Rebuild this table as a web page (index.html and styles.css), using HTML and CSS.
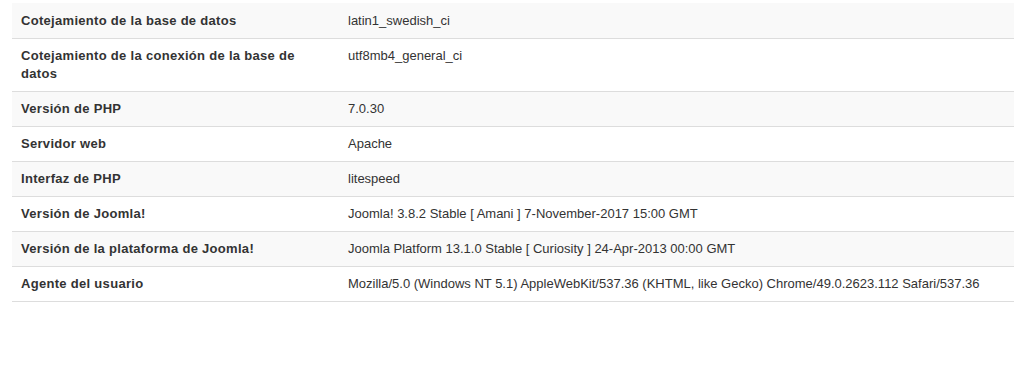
FILE: index.html
```html
<!DOCTYPE html>
<html lang="es">
<head>
<meta charset="utf-8">
<title>Información del sistema</title>
<link rel="stylesheet" href="styles.css">
</head>
<body>
<table class="info-table">
  <tbody>
    <tr><th>Cotejamiento de la base de datos</th><td>latin1_swedish_ci</td></tr>
    <tr><th>Cotejamiento de la conexión de la base de datos</th><td>utf8mb4_general_ci</td></tr>
    <tr><th>Versión de PHP</th><td>7.0.30</td></tr>
    <tr><th>Servidor web</th><td>Apache</td></tr>
    <tr><th>Interfaz de PHP</th><td>litespeed</td></tr>
    <tr><th>Versión de Joomla!</th><td>Joomla! 3.8.2 Stable [ Amani ] 7-November-2017 15:00 GMT</td></tr>
    <tr><th>Versión de la plataforma de Joomla!</th><td>Joomla Platform 13.1.0 Stable [ Curiosity ] 24-Apr-2013 00:00 GMT</td></tr>
    <tr><th>Agente del usuario</th><td>Mozilla/5.0 (Windows NT 5.1) AppleWebKit/537.36 (KHTML, like Gecko) Chrome/49.0.2623.112 Safari/537.36</td></tr>
  </tbody>
</table>
</body>
</html>
```

FILE: styles.css
```css
html, body {
  margin: 0;
  background: #ffffff;
}
body {
  padding: 3px 6px 0 12px;
  font-family: "Liberation Sans", Arial, sans-serif;
  font-size: 13px;
  line-height: 18px;
  color: #333333;
}
.info-table {
  width: 1002px;
  border-collapse: collapse;
  border-spacing: 0;
}
.info-table th,
.info-table td {
  padding: 8px 9px 8px;
  text-align: left;
  vertical-align: top;
  border-top: 1px solid #dddddd;
}
.info-table tr:first-child th,
.info-table tr:first-child td {
  border-top-color: #f9f9f9;
}
.info-table tr:last-child th,
.info-table tr:last-child td {
  border-bottom: 1px solid #dddddd;
}
.info-table th {
  width: 309px;
  font-weight: bold;
  letter-spacing: 0.3px;
}
.info-table tr:nth-child(odd) th,
.info-table tr:nth-child(odd) td {
  background: #f9f9f9;
}
```
